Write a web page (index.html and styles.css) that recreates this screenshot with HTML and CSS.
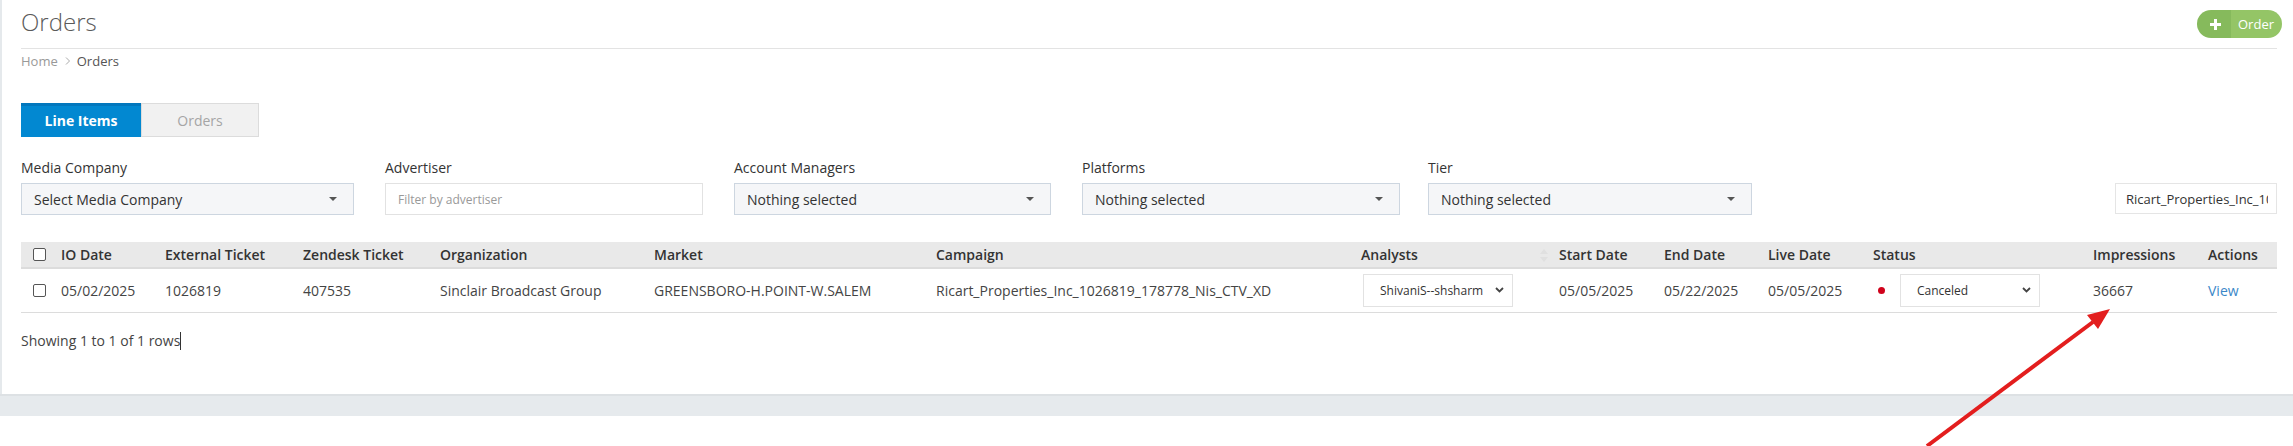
FILE: index.html
```html
<!DOCTYPE html>
<html lang="en">
<head>
<meta charset="utf-8">
<title>Orders</title>
<link rel="stylesheet" href="styles.css">
</head>
<body>
<div class="card">
  <div class="page-head">
    <h1 class="page-title">Orders</h1>
    <div class="btn-order">
      <span class="btn-icon"><svg width="11" height="11" viewBox="0 0 11 11"><rect x="4" y="0" width="3" height="11" fill="#fff"/><rect x="0" y="4" width="11" height="3" fill="#fff"/></svg></span>
      <span class="btn-label">Order</span>
    </div>
  </div>
  <div class="breadcrumb">
    <span class="crumb-home">Home</span>
    <span class="crumb-sep"><svg width="6" height="8" viewBox="0 0 6 8"><path d="M1 0.5 L4.5 4 L1 7.5" fill="none" stroke="#aaa" stroke-width="1"/></svg></span>
    <span class="crumb-current">Orders</span>
  </div>

  <div class="tabs">
    <div class="tab tab-active">Line Items</div>
    <div class="tab">Orders</div>
  </div>

  <div class="filters">
    <div class="filter f-media">
      <div class="filter-label">Media Company</div>
      <div class="select-box"><span>Select Media Company</span><span class="caret"></span></div>
    </div>
    <div class="filter f-adv">
      <div class="filter-label">Advertiser</div>
      <div class="input-box"><span class="placeholder">Filter by advertiser</span></div>
    </div>
    <div class="filter f-am">
      <div class="filter-label">Account Managers</div>
      <div class="select-box"><span>Nothing selected</span><span class="caret"></span></div>
    </div>
    <div class="filter f-plat">
      <div class="filter-label">Platforms</div>
      <div class="select-box"><span>Nothing selected</span><span class="caret"></span></div>
    </div>
    <div class="filter f-tier">
      <div class="filter-label">Tier</div>
      <div class="select-box"><span>Nothing selected</span><span class="caret"></span></div>
    </div>
    <div class="search-box"><span class="search-text">Ricart_Properties_Inc_1026819_178778_Nis_CTV_XD</span></div>
  </div>

  <table class="grid">
    <colgroup>
      <col class="c-chk"><col class="c-io"><col class="c-ext"><col class="c-zen"><col class="c-org"><col class="c-mkt"><col class="c-camp"><col class="c-an"><col class="c-sd"><col class="c-ed"><col class="c-ld"><col class="c-st"><col class="c-imp"><col class="c-act">
    </colgroup>
    <thead>
      <tr>
        <th class="chk-cell"><span class="chk"></span></th>
        <th>IO Date</th>
        <th>External Ticket</th>
        <th>Zendesk Ticket</th>
        <th>Organization</th>
        <th>Market</th>
        <th>Campaign</th>
        <th class="sortable">Analysts<svg class="sort-icon" width="8" height="13" viewBox="0 0 8 13"><path d="M4 0 L8 5 L0 5 Z" fill="#e0e0e0"/><path d="M4 13 L8 8 L0 8 Z" fill="#e0e0e0"/></svg></th>
        <th>Start Date</th>
        <th>End Date</th>
        <th>Live Date</th>
        <th>Status</th>
        <th>Impressions</th>
        <th>Actions</th>
      </tr>
    </thead>
    <tbody>
      <tr>
        <td class="chk-cell"><span class="chk"></span></td>
        <td>05/02/2025</td>
        <td>1026819</td>
        <td>407535</td>
        <td>Sinclair Broadcast Group</td>
        <td>GREENSBORO-H.POINT-W.SALEM</td>
        <td>Ricart_Properties_Inc_1026819_178778_Nis_CTV_XD</td>
        <td><div class="mini-select analyst-select"><span>ShivaniS--shsharm</span><svg class="chev" width="9" height="6" viewBox="0 0 9 6"><path d="M1 1 L4.5 4.5 L8 1" fill="none" stroke="#444" stroke-width="1.8"/></svg></div></td>
        <td>05/05/2025</td>
        <td>05/22/2025</td>
        <td>05/05/2025</td>
        <td><div class="status-cell"><span class="dot"></span><div class="mini-select status-select"><span>Canceled</span><svg class="chev" width="9" height="6" viewBox="0 0 9 6"><path d="M1 1 L4.5 4.5 L8 1" fill="none" stroke="#444" stroke-width="1.8"/></svg></div></div></td>
        <td>36667</td>
        <td><a class="view-link">View</a></td>
      </tr>
    </tbody>
  </table>

  <div class="showing">Showing 1 to 1 of 1 rows<span class="cursor"></span></div>
</div>
<div class="footer-band"></div>

<svg class="annot" width="2293" height="446" viewBox="0 0 2293 446">
  <line x1="1927" y1="446" x2="2093" y2="322" stroke="#e31e1e" stroke-width="4"/>
  <polygon points="2110,309 2087,315 2098,329" fill="#e31e1e"/>
</svg>
</body>
</html>
```

FILE: styles.css
```css
* { box-sizing: border-box; }

html, body {
  margin: 0;
  padding: 0;
  background: #ffffff;
  font-family: "Open Sans", "Noto Sans", "Liberation Sans", sans-serif;
  font-size: 14px;
  color: #444;
}

body {
  position: relative;
  width: 2293px;
  height: 446px;
  overflow: hidden;
}

.card {
  height: 394px;
  border-left: 2px solid #e5e9ec;
  padding: 0 16px 0 19px;
  background: #fff;
}

.page-head {
  height: 49px;
  display: flex;
  justify-content: space-between;
  align-items: flex-start;
  border-bottom: 1px solid #e3e3e3;
}

.page-title {
  margin: 5px 0 0 0;
  font-size: 24px;
  font-weight: 300;
  color: #5a5a5a;
  line-height: 33px;
}

.btn-order {
  margin-top: 10px;
  margin-right: -5px;
  height: 28px;
  width: 85px;
  display: flex;
  border-radius: 14px;
  overflow: hidden;
  color: #fff;
  font-size: 13px;
}

.btn-icon {
  width: 34px;
  background: #86ba5c;
  display: flex;
  align-items: center;
  justify-content: center;
  padding-left: 2px;
}

.btn-label {
  flex: 1;
  background: #94c566;
  display: flex;
  align-items: center;
  padding-left: 7px;
}

.breadcrumb {
  margin-top: 3px;
  height: 18px;
  line-height: 18px;
  font-size: 13px;
  display: flex;
  align-items: center;
}

.crumb-home { color: #999; }
.crumb-sep { margin: 0 6px 0 7px; display: flex; align-items: center; }
.crumb-current { color: #555; }

.tabs {
  margin-top: 33px;
  display: flex;
  height: 34px;
}

.tab {
  width: 118px;
  height: 34px;
  display: flex;
  align-items: center;
  justify-content: center;
  font-size: 14px;
  color: #a5a5a5;
  background: #f1f1f1;
  border: 1px solid #dcdcdc;
}

.tab-active {
  width: 120px;
  background: #0288d1;
  border: none;
  border-top: 3px solid #0277bd;
  color: #fff;
  font-weight: 700;
  padding-bottom: 2px;
}

.filters {
  margin-top: 21px;
  display: flex;
  align-items: flex-end;
}

.filter { display: flex; flex-direction: column; }
.f-media { width: 333px; }
.f-adv { width: 318px; margin-left: 31px; }
.f-am { width: 317px; margin-left: 31px; }
.f-plat { width: 318px; margin-left: 31px; }
.f-tier { width: 324px; margin-left: 28px; }

.filter-label {
  font-size: 14px;
  line-height: 20px;
  color: #333;
  margin-bottom: 5px;
}

.select-box {
  height: 32px;
  background: #f5f6f8;
  border: 1px solid #cdd6e0;
  display: flex;
  align-items: center;
  justify-content: space-between;
  padding: 0 16px 0 12px;
  font-size: 14px;
  color: #333;
}

.caret {
  width: 0;
  height: 0;
  border-left: 4px solid transparent;
  border-right: 4px solid transparent;
  border-top: 4px solid #555;
}

.input-box {
  height: 32px;
  background: #fff;
  border: 1px solid #e2e2e2;
  display: flex;
  align-items: center;
  padding-left: 12px;
}

.placeholder {
  font-size: 12px;
  color: #999;
}

.search-box {
  margin-left: auto;
  width: 162px;
  height: 31px;
  border: 1px solid #e5e5e5;
  background: #fff;
  display: flex;
  align-items: center;
  padding: 0 8px 0 10px;
  margin-bottom: 1px;
}

.search-text {
  display: block;
  width: 100%;
  overflow: hidden;
  white-space: nowrap;
  font-size: 13px;
  color: #333;
}

.grid {
  margin-top: 27px;
  width: 2256px;
  border-collapse: collapse;
  table-layout: fixed;
}

.c-chk { width: 32px; }
.c-io { width: 104px; }
.c-ext { width: 138px; }
.c-zen { width: 137px; }
.c-org { width: 214px; }
.c-mkt { width: 282px; }
.c-camp { width: 425px; }
.c-an { width: 198px; }
.c-sd { width: 105px; }
.c-ed { width: 104px; }
.c-ld { width: 105px; }
.c-st { width: 220px; }
.c-imp { width: 115px; }
.c-act { width: 77px; }

.grid th {
  background: #e9e9e9;
  height: 26px;
  padding: 0 8px;
  text-align: left;
  font-weight: 600;
  font-size: 14px;
  color: #333;
  border-bottom: 2px solid #dcdcdc;
  white-space: nowrap;
}

.grid th.sortable { position: relative; }

.sort-icon {
  position: absolute;
  right: 3px;
  top: 7px;
}

.grid td {
  height: 44px;
  padding: 0 8px;
  font-size: 14px;
  color: #444;
  border-bottom: 1px solid #dcdcdc;
  white-space: nowrap;
}

.grid .chk-cell {
  padding: 0 0 0 12px;
}

.chk {
  display: block;
  width: 13px;
  height: 13px;
  border: 1px solid #555;
  border-radius: 2px;
  background: #fff;
}

.mini-select {
  height: 33px;
  border: 1px solid #e2e2e2;
  background: #fff;
  display: flex;
  align-items: center;
  justify-content: space-between;
  font-size: 12px;
  color: #333;
}

.analyst-select {
  width: 150px;
  margin-left: 2px;
  padding: 0 8px 0 16px;
}

.status-cell {
  display: flex;
  align-items: center;
}

.dot {
  width: 7px;
  height: 7px;
  border-radius: 50%;
  background: #d0021b;
  margin-left: 5px;
}

.status-select {
  width: 140px;
  margin-left: 15px;
  padding: 0 8px 0 16px;
}

.view-link {
  color: #3a87c8;
}

.showing {
  margin-top: 18px;
  line-height: 20px;
  font-size: 14px;
  color: #444;
  display: flex;
  align-items: center;
}

.cursor {
  display: inline-block;
  width: 1px;
  height: 18px;
  background: #333;
}

.footer-band {
  height: 22px;
  background: #e6eaed;
  border-top: 2px solid #dde1e4;
}

.annot {
  position: absolute;
  left: 0;
  top: 0;
  pointer-events: none;
}
```
